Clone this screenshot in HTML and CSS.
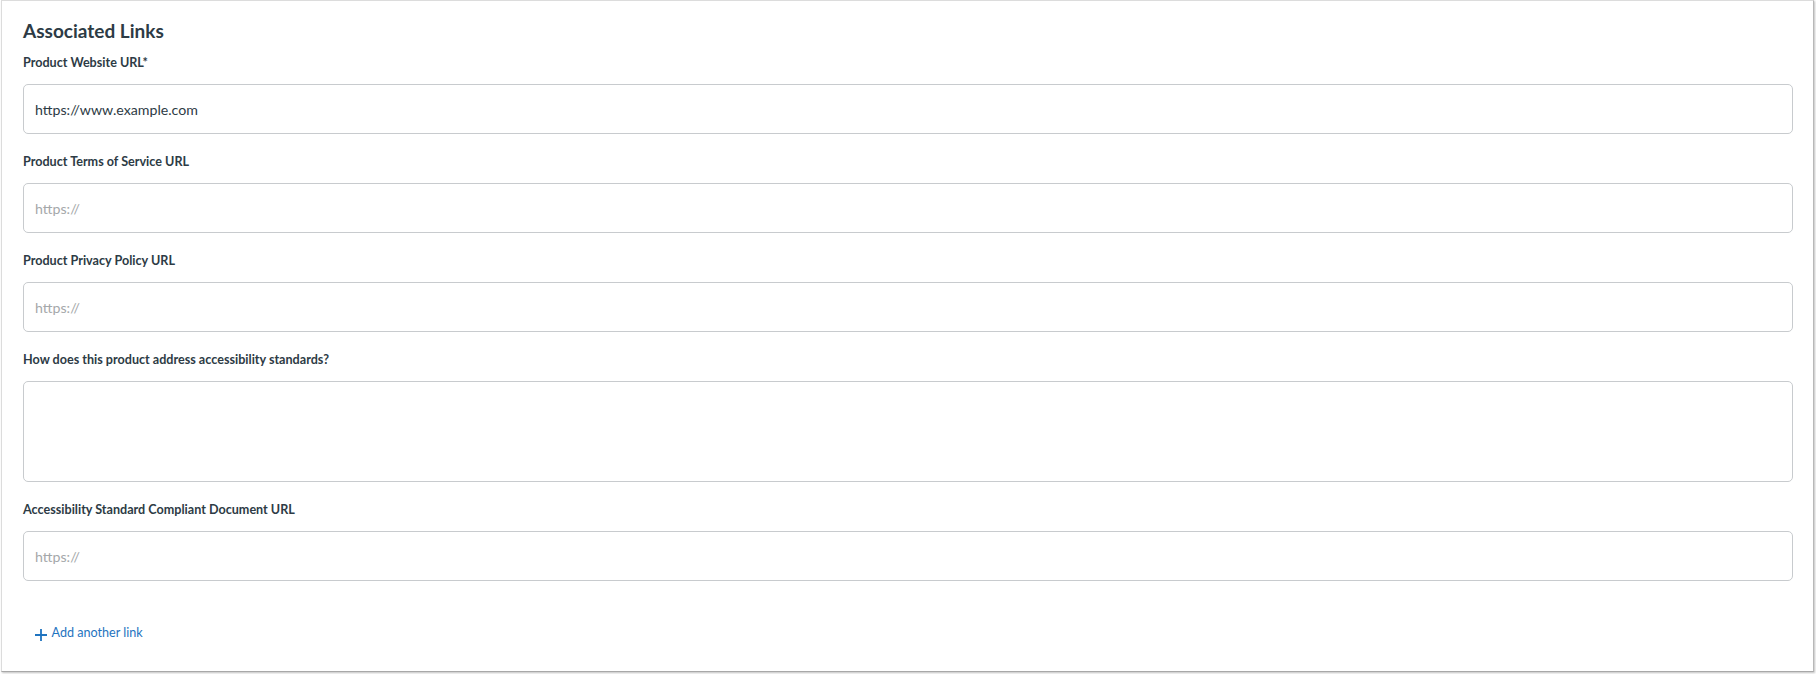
FILE: index.html
```html
<!DOCTYPE html>
<html lang="en">
<head>
<meta charset="utf-8">
<title>Associated Links</title>
<link rel="stylesheet" href="styles.css">
</head>
<body>
<section class="card">
  <h2 class="card-title">Associated Links</h2>
  <div class="field">
    <label class="field-label" for="website">Product Website URL*</label>
    <input class="field-input" id="website" type="text" value="https://www.example.com">
  </div>
  <div class="field">
    <label class="field-label" for="tos">Product Terms of Service URL</label>
    <input class="field-input" id="tos" type="text" placeholder="https://">
  </div>
  <div class="field">
    <label class="field-label" for="privacy">Product Privacy Policy URL</label>
    <input class="field-input" id="privacy" type="text" placeholder="https://">
  </div>
  <div class="field">
    <label class="field-label" for="a11y">How does this product address accessibility standards?</label>
    <textarea class="field-input field-textarea" id="a11y"></textarea>
  </div>
  <div class="field">
    <label class="field-label" for="a11ydoc">Accessibility Standard Compliant Document URL</label>
    <input class="field-input" id="a11ydoc" type="text" placeholder="https://">
  </div>
  <button class="add-link" type="button">
    <svg class="add-icon" viewBox="0 0 12 12" width="12" height="12" aria-hidden="true"><path d="M6 0v12M0 6h12" fill="none" stroke="currentColor" stroke-width="1.8"/></svg>
    <span class="add-text">Add another link</span>
  </button>
</section>
</body>
</html>
```

FILE: styles.css
```css
* { box-sizing: border-box; }
html, body { margin: 0; padding: 0; background: #ffffff; }
body {
  font-family: Lato, "Open Sans", "Liberation Sans", sans-serif;
  color: #2d3b45;
}
.card {
  margin: 0 2px 2px 1px;
  height: 672px;
  border: 1px solid #dcdcdc;
  border-right-color: #b8b8b8;
  border-bottom-color: #a8a8a8;
  box-shadow: 1px 1px 2px rgba(0, 0, 0, 0.25);
  background: #ffffff;
  padding: 20px 20px 0 21px;
  display: flex;
  flex-direction: column;
  align-items: stretch;
}
.card-title {
  margin: 0 0 12.8px;
  font-size: 19px;
  line-height: 20px;
  font-weight: 700;
  color: #2d3b45;
}
.field {
  display: flex;
  flex-direction: column;
  margin-bottom: 18.5px;
}
.field-label {
  font-size: 12.6px;
  line-height: 18px;
  font-weight: 700;
  color: #2d3b45;
  margin-bottom: 12.5px;
}
.field-input {
  flex: none;
  height: 50px;
  width: 100%;
  border: 1px solid #c8cbce;
  border-radius: 5px;
  padding: 0 11px;
  font-family: Lato, "Open Sans", "Liberation Sans", sans-serif;
  font-size: 14.2px;
  color: #2d3b45;
  background: #ffffff;
  outline: none;
}
.field-input::placeholder { color: #a5a8aa; }
.field-textarea {
  height: 101px;
  resize: none;
  padding: 11px;
}
.add-link {
  align-self: flex-start;
  margin-top: 24.6px;
  margin-left: 11.5px;
  display: flex;
  align-items: flex-start;
  gap: 5px;
  background: none;
  border: 0;
  padding: 0;
  font-family: Lato, "Open Sans", "Liberation Sans", sans-serif;
  font-size: 12.6px;
  line-height: 18px;
  color: #1f74c0;
  cursor: pointer;
}
.add-icon { display: block; flex: none; margin-top: 4.3px; }
```
